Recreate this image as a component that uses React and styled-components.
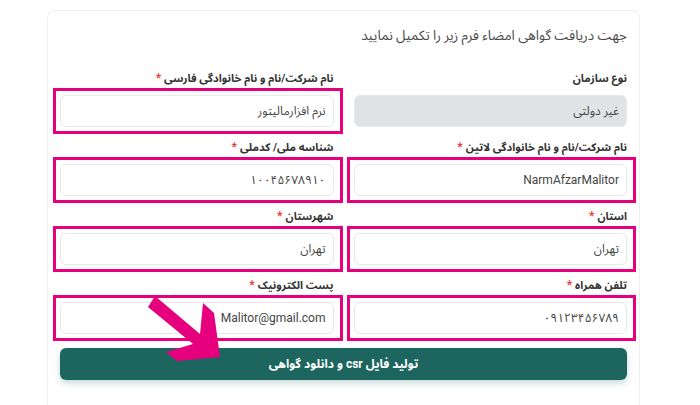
import styled, { createGlobalStyle } from "styled-components";

const fontStack = `Roboto, "Noto Sans Arabic", "DejaVu Sans", sans-serif`;

const GlobalStyle = createGlobalStyle`
  body {
    margin: 0;
    background: #fff;
    font-family: ${fontStack};
    overflow: hidden;
  }
`;

const Page = styled.div`
  position: relative;
  padding: 10px 60px 0 47px;
  height: 405px;
  box-sizing: border-box;
`;

const Card = styled.div`
  direction: rtl;
  width: 593px;
  box-sizing: border-box;
  border: 1px solid #efefef;
  border-radius: 8px;
  padding: 12px 12px 40px;
  min-height: 420px;
`;

const Title = styled.h1`
  margin: 0 0 22px;
  font-size: 13.5px;
  line-height: 24px;
  font-weight: 400;
  color: #4a4a4a;
`;

const Grid = styled.div`
  display: grid;
  grid-template-columns: 1fr 1fr;
  column-gap: 20px;
  row-gap: 11px;
`;

const Field = styled.div`
  display: flex;
  flex-direction: column;
`;

const Label = styled.label`
  display: block;
  height: 20px;
  font-size: 11px;
  line-height: 20px;
  font-weight: 700;
  color: #333;
  margin-bottom: 6px;
  white-space: nowrap;
`;

const Star = styled.span`
  color: #e23b3b;
  font-size: 12px;
  line-height: 1;
  margin-right: 3px;
`;

const InputBox = styled.div`
  position: relative;

  ${({ $marked }) =>
    $marked &&
    `
    &::after {
      content: "";
      position: absolute;
      top: -7px;
      bottom: -7px;
      right: -9px;
      left: -7px;
      border: 3px solid #e6007e;
      pointer-events: none;
    }
  `}
`;

const Input = styled.input`
  display: block;
  width: 100%;
  height: 32px;
  box-sizing: border-box;
  border: 1px solid #e6e8eb;
  border-radius: 6px;
  padding: 0 7px;
  font-family: ${fontStack};
  font-size: 12px;
  color: #444;
  background: ${({ disabled }) => (disabled ? "#e0e3e6" : "#fff")};
  text-align: right;
  outline: none;
`;

const SubmitButton = styled.button`
  display: block;
  margin-top: 14px;
  width: 100%;
  height: 32px;
  border: none;
  border-radius: 6px;
  background: #1c665f;
  color: #fff;
  font-family: ${fontStack};
  font-size: 12px;
  font-weight: 700;
  box-shadow: 0 3px 6px rgba(28, 102, 95, 0.25);
  cursor: pointer;
`;

const Arrow = styled.svg`
  position: absolute;
  left: 0;
  top: 0;
  pointer-events: none;
`;

const fields = [
  { label: "نوع سازمان", value: "غیر دولتی", disabled: true },
  { label: "نام شرکت/نام و نام خانوادگی فارسی", value: "نرم افزارمالیتور", required: true, marked: true },
  { label: "نام شرکت/نام و نام خانوادگی لاتین", value: "NarmAfzarMalitor", required: true, marked: true },
  { label: "شناسه ملی/ کدملی", value: "۱۰۰۴۵۶۷۸۹۱۰", required: true, marked: true },
  { label: "استان", value: "تهران", required: true, marked: true },
  { label: "شهرستان", value: "تهران", required: true, marked: true },
  { label: "تلفن همراه", value: "۰۹۱۲۳۴۵۶۷۸۹", required: true, marked: true },
  { label: "پست الکترونیک", value: "Malitor@gmail.com", required: true, marked: true },
];

export default function App() {
  return (
    <>
      <GlobalStyle />
      <Page>
        <Card lang="fa">
          <Title>جهت دریافت گواهی امضاء فرم زیر را تکمیل نمایید</Title>
          <Grid>
            {fields.map((f) => (
              <Field key={f.label}>
                <Label>
                  {f.label}
                  {f.required && <Star>*</Star>}
                </Label>
                <InputBox $marked={f.marked}>
                  <Input defaultValue={f.value} disabled={f.disabled} />
                </InputBox>
              </Field>
            ))}
          </Grid>
          <SubmitButton>تولید فایل csr و دانلود گواهی</SubmitButton>
        </Card>
        <Arrow width="700" height="405" viewBox="0 0 700 405">
          <polygon
            points="155,296 200,334 203,303 214,313 220,357 177,361 166,352 193,344 148,307"
            fill="#e6007e"
          />
        </Arrow>
      </Page>
    </>
  );
}
